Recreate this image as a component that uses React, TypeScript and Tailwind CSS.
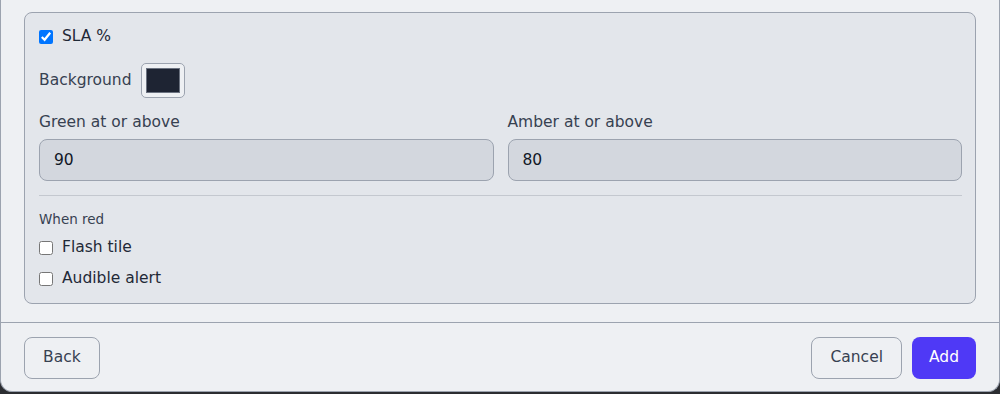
import { useState } from 'react'

function Check({ label, checked }: { label: string; checked?: boolean }) {
  const [on, setOn] = useState(!!checked)
  return (
    <label className="flex items-center gap-[9px] h-[22px] text-[15.5px] text-[#1f2937]">
      <input
        type="checkbox"
        checked={on}
        onChange={() => setOn(v => !v)}
        className="w-[14px] h-[14px] m-0"
      />
      {label}
    </label>
  )
}

function Field({ label, value }: { label: string; value: string }) {
  return (
    <div className="flex flex-col">
      <span className="text-[15.5px] leading-[22px] text-[#374151]">{label}</span>
      <input
        defaultValue={value}
        className="mt-[6px] h-[42px] rounded-lg border border-[#9ca3af] bg-[#d3d7de] px-[14px] text-[15.5px] text-[#111827] outline-none"
      />
    </div>
  )
}

export default function App() {
  return (
    <div className="h-[394px] bg-[#2b2d31] font-['DejaVu_Sans',sans-serif]">
      <div className="h-[392px] flex flex-col bg-[#eef0f3] border border-t-0 border-[#9ca3af] rounded-b-xl overflow-hidden">
        <div className="px-[23px] pt-[12px] pb-[18px]">
          <div className="rounded-lg border border-[#9ca3af] bg-[#e3e6eb] pl-[14px] pr-[13px] pt-[13px] pb-[13px]">
            <Check label="SLA %" checked />

            <div className="mt-[15px] flex items-center gap-[10px]">
              <span className="text-[15.5px] text-[#374151]">Background</span>
              <div className="w-[44px] h-[35px] rounded-[5px] border border-[#9ca3af] bg-[#eef0f3] p-[4px]">
                <div className="w-full h-full bg-[#1e2433] border border-[#6b7280]" />
              </div>
            </div>

            <div className="mt-[13px] grid grid-cols-2 gap-[14px]">
              <Field label="Green at or above" value="90" />
              <Field label="Amber at or above" value="80" />
            </div>

            <div className="mt-[14px] border-t border-[#c4c8cf]" />

            <div className="mt-[14px] text-[13.5px] leading-[18px] text-[#374151]">When red</div>
            <div className="mt-[9px] flex flex-col gap-[9px]">
              <Check label="Flash tile" />
              <Check label="Audible alert" />
            </div>
          </div>
        </div>

        <div className="flex items-center border-t border-[#9ca3af] px-[23px] pt-[14px]">
          <button className="h-[42px] px-[18px] rounded-lg border border-[#9ca3af] bg-[#eef0f3] text-[15.5px] text-[#374151]">
            Back
          </button>
          <div className="ml-auto flex gap-[10px]">
            <button className="h-[42px] px-[18px] rounded-lg border border-[#9ca3af] bg-[#eef0f3] text-[15.5px] text-[#374151]">
              Cancel
            </button>
            <button className="h-[42px] px-[17px] rounded-lg bg-[#4f39f6] text-[15.5px] text-white">
              Add
            </button>
          </div>
        </div>
      </div>
    </div>
  )
}
